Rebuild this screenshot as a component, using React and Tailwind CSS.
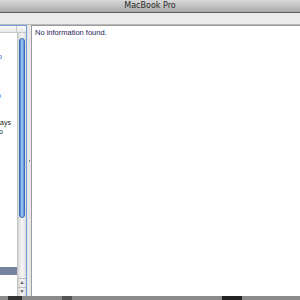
import React from "react";

export default function App() {
  const font = { fontFamily: '"Liberation Sans", Arial, sans-serif' };
  return (
    <div className="w-[300px] h-[300px] flex flex-col overflow-hidden bg-[#e8e8e8]" style={font}>
      {/* title bar */}
      <div className="h-[13px] shrink-0 flex items-center justify-center bg-gradient-to-b from-[#d9d9d9] to-[#a9a9a9] border-b border-[#5a5a5a]">
        <span className="text-[8px] leading-none text-[#2a2a2a]" style={{ fontFamily: '"DejaVu Sans", sans-serif' }}>MacBook Pro</span>
      </div>
      {/* toolbar strip */}
      <div className="h-[12px] shrink-0 bg-[#ebebeb] border-b border-[#b9b9b9]" />
      {/* main area */}
      <div className="flex-1 flex min-h-0">
        {/* left pane */}
        <div className="w-[27px] shrink-0 flex flex-col border-t border-r border-[#6f9bd8] bg-white">
          <div className="h-[7px] shrink-0 flex border-b border-[#c8c8c8] bg-gradient-to-b from-[#fafafa] to-[#e8e8e8]">
            <div className="w-[17px] border-r border-[#c8c8c8]" />
            <div className="flex-1" />
          </div>
          <div className="flex-1 flex min-h-0">
            {/* list */}
            <div className="w-[17px] flex flex-col overflow-hidden text-[7px] leading-[8px]">
              <div className="h-[20px]" />
              <div className="h-[8px] flex justify-end whitespace-nowrap text-[#2a54c8] pr-[15px]">Info</div>
              <div className="h-[31px]" />
              <div className="h-[8px] flex justify-end whitespace-nowrap text-[#2a54c8] pr-[16px]">Info</div>
              <div className="h-[19px]" />
              <div className="h-[9px] flex justify-end whitespace-nowrap text-[#222] pr-[6px]">Displays</div>
              <div className="h-[9px] flex justify-end whitespace-nowrap text-[#222] pr-[14px]">Audio</div>
              <div className="h-[130px]" />
              <div className="h-[8px] bg-[#75849e]" />
            </div>
            {/* scrollbar */}
            <div className="w-[9px] flex flex-col bg-gradient-to-r from-[#d6d6d6] via-[#f7f7f7] to-[#dcdcdc] border-l border-[#c4c4c4]">
              <div className="h-[5px]" />
              <div className="h-[180px] mx-[1px] rounded-full bg-gradient-to-r from-[#3f78c8] via-[#a9d2fb] to-[#4f86d0] border border-[#3a6cb8]" />
              <div className="flex-1" />
              <div className="h-[9px] flex items-center justify-center border-t border-[#bdbdbd] text-[5px] text-[#555]">▲</div>
              <div className="h-[9px] flex items-center justify-center border-t border-[#bdbdbd] text-[5px] text-[#555]">▼</div>
            </div>
          </div>
        </div>
        {/* splitter */}
        <div className="w-[4px] shrink-0 flex items-center justify-center">
          <div className="w-[1px] h-[2px] bg-[#888]" />
        </div>
        {/* right pane */}
        <div className="flex-1 bg-white border-t border-l border-[#9a9a9a] pl-[3px] pt-[2px]">
          <div className="text-[7.5px] leading-[9px] text-[#1c2458]">No information found.</div>
        </div>
      </div>
      {/* bottom desktop strip */}
      <div className="h-[4px] shrink-0 flex bg-[#8a8a8a]">
        <div className="w-[8px]" />
        <div className="w-[14px] bg-[#333]" />
        <div className="w-[40px]" />
        <div className="w-[10px] bg-[#555]" />
        <div className="w-[150px]" />
        <div className="w-[20px] bg-[#222]" />
        <div className="flex-1" />
      </div>
    </div>
  );
}
